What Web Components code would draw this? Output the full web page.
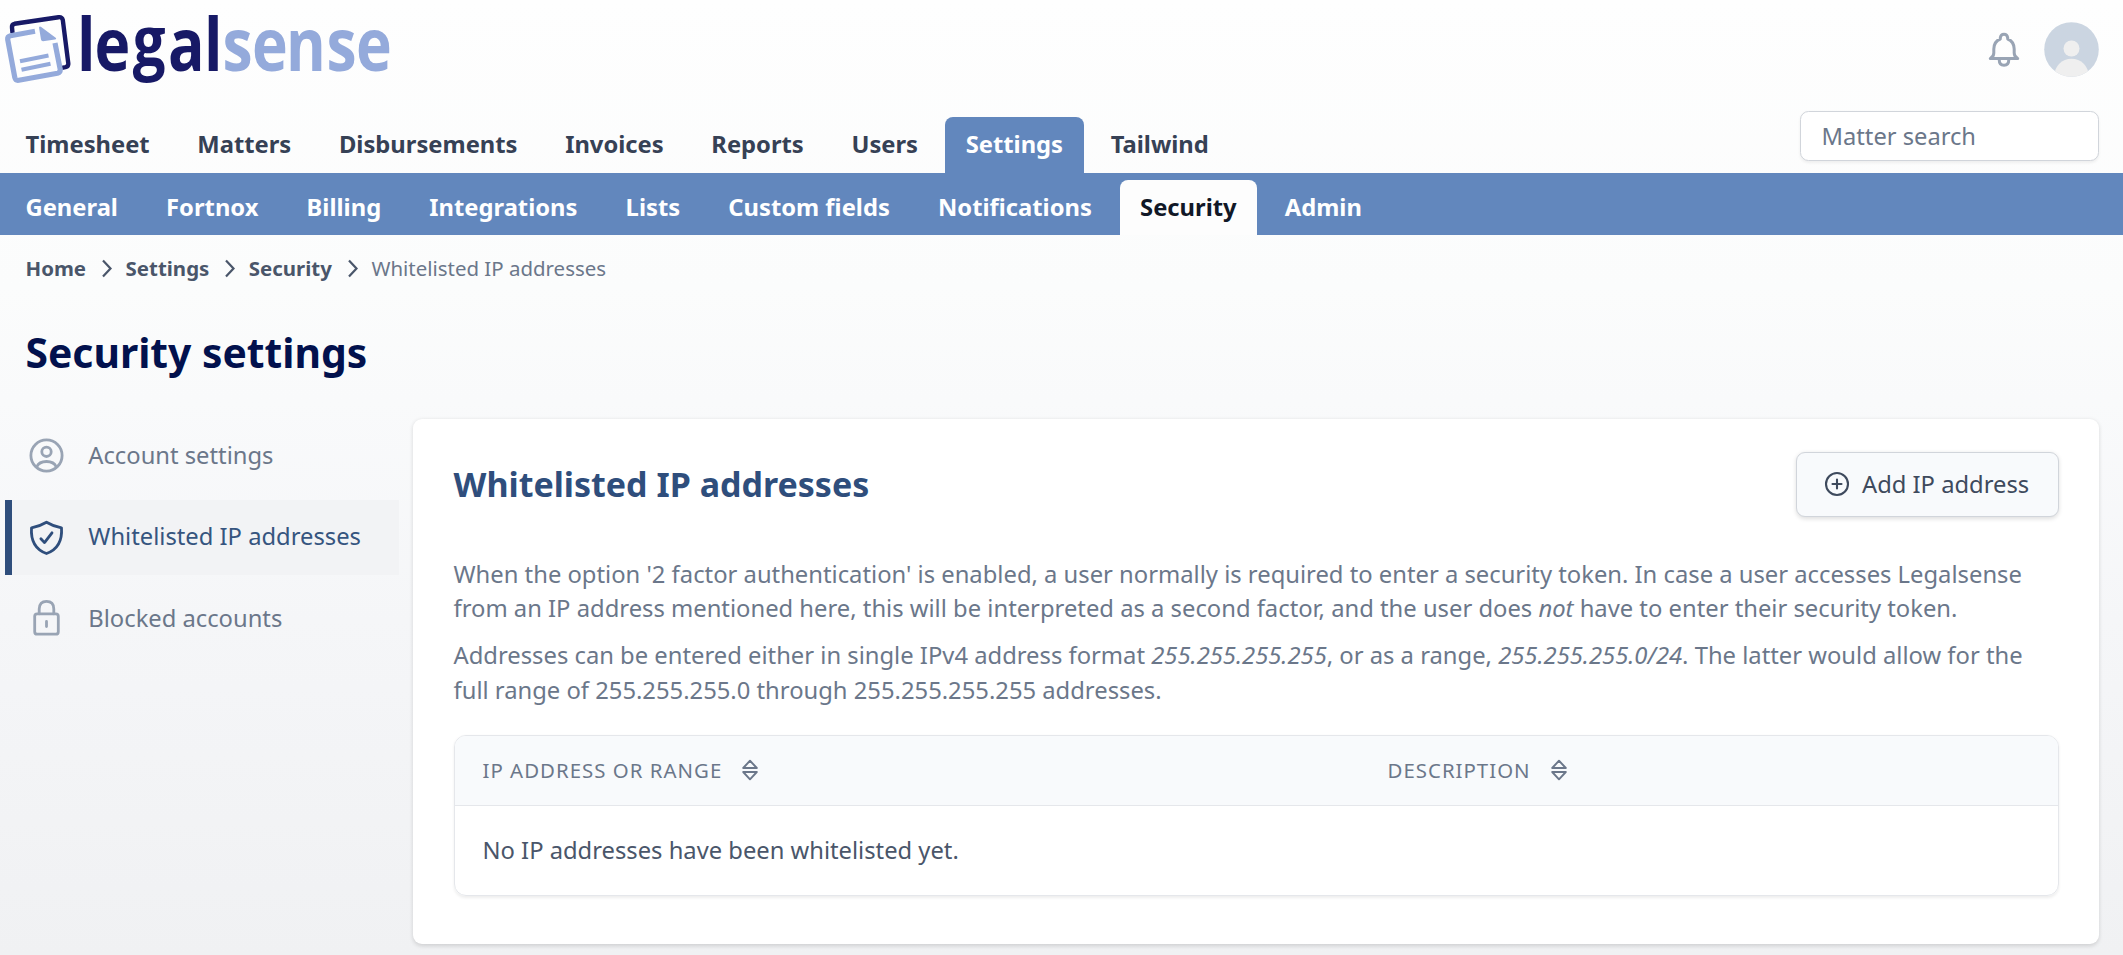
<!DOCTYPE html>
<html lang="en">
<head>
<meta charset="utf-8">
<title>Legalsense</title>
<style>
html,body{margin:0;height:100%}
body{font-family:"Noto Sans",sans-serif;font-size:23.75px;line-height:34.2px;color:#4a566a;overflow:hidden}
</style>
</head>
<body>
<ls-app></ls-app>
<script>
const define = (name, html) => {
  const tpl = document.createElement('template');
  tpl.innerHTML = html;
  customElements.define(name, class extends HTMLElement {
    constructor(){ super(); this.attachShadow({mode:'open'}).append(tpl.content.cloneNode(true)); }
  });
};

define('ls-logo', `
<style>:host{display:block;width:400px;height:100px}svg{display:block;overflow:visible}text{font-family:"Open Sans","Noto Sans",sans-serif;font-size:73px;font-weight:700}</style>
<svg width="400" height="100" viewBox="0 0 400 100">
  <g fill="none" stroke-width="4.4" stroke-linejoin="round">
    <path stroke="#171966" d="M12.5 33L12 27.500Q11.600 24.500 14.500 23.800L58.500 17.200Q62 16.800 62.800 20L68.300 63.500Q68.600 66.500 65.500 67.200L62 67.800"/>
    <path stroke="#94aadb" stroke-width="5.2" d="M35 31.300L10.500 35.700Q7.300 36.500 7.700 39.500L14.800 77.500Q15.600 80.800 18.800 80.300L57.500 73.300Q60.700 72.500 60.200 69.200L55 43"/>
    <path stroke="#94aadb" stroke-width="4.200" d="M20 61.300L48.500 55.500M21.500 69.700L50.500 63.700"/>
  </g>
  <path fill="#94aadb" d="M39 27.500Q39.600 25.700 41.200 27L56 38Q56.700 39 55 39.500L43 41.200Q41.300 41.200 41 39.500Z"/>
  <text transform="scale(.83 1)" y="71" x="92.800 113.900 159.800 202.500 245.800" fill="#171966">le<tspan font-size="70" dy="-5.500">g</tspan><tspan dy="5.500">al</tspan></text>
  <text transform="scale(.83 1)" y="71" x="268.100 303.600 344.600 393.400 428.900" fill="#94aadb">sense</text>
</svg>`);

define('ls-bell', `
<style>:host{display:block;width:32px;height:36px}svg{display:block}</style>
<svg width="32" height="36" viewBox="0 0 32 36" fill="none" stroke="#99a4b4" stroke-width="3" stroke-linecap="round" stroke-linejoin="round">
<path d="M2.300 26.500H29.700M2.300 26.500Q5.800 24.500 5.800 21V17Q6 9.500 12.300 7V5.800Q12.800 2.200 16 2.200Q19.200 2.200 19.700 5.800V7Q26 9.500 26.200 17V21Q26.200 24.500 29.700 26.500M11.200 27.500Q11.200 33.300 16 33.300Q20.800 33.300 20.800 27.500"/></svg>`);

define('ls-avatar', `
<style>:host{display:block;width:55px;height:55px}svg{display:block}</style>
<svg width="55" height="55" viewBox="0 0 55 55"><defs><clipPath id="c"><circle cx="27.500" cy="27.500" r="27.300"/></clipPath></defs>
<g clip-path="url(#c)"><rect width="55" height="55" fill="#cbd5e1"/><g fill="#efefef"><circle cx="27.500" cy="26.500" r="8"/><circle cx="27.500" cy="54" r="17.300"/></g></g></svg>`);

define('ls-search', `
<style>:host{display:flex;align-items:center;box-sizing:border-box;width:299px;height:50.500px;padding:0 20.500px;border:1.500px solid #d1d5db;border-radius:8.500px;background:#fff;color:#6b778a;font-size:23.700px;box-shadow:0 1.400px 3px rgba(0,0,0,.06)}</style><slot></slot>`);

define('ls-tab', `
<style>
:host{display:block;flex:none;box-sizing:border-box;height:56px;padding:10.300px 20.500px 0;border-radius:8px 8px 0 0;font-weight:700;font-size:23.750px;color:#364155;white-space:nowrap}
:host([level="2"]){color:#fff;height:54.500px}
:host([active]){background:#6287bd;color:#fff}
:host([level="2"][active]){background:#fdfdfd;color:#111827}
</style><slot></slot>`);

define('ls-header', `
<style>
:host{display:block}
.top{display:flex;justify-content:space-between;height:100px}
.user{display:flex;align-items:center;gap:24px;height:99px;padding-right:24px}
.main{display:flex;justify-content:space-between;height:73px}
nav{display:flex;gap:6.650px;padding-left:5px;align-items:flex-end}
ls-search{margin:10.500px 24px 0 0}
.sub{display:flex;align-items:flex-end;background:#6287bd;height:61.500px}
.sub nav{gap:7.150px}
</style>
<div class="top"><ls-logo></ls-logo><div class="user"><ls-bell></ls-bell><ls-avatar></ls-avatar></div></div>
<div class="main"><nav><ls-tab>Timesheet</ls-tab><ls-tab>Matters</ls-tab><ls-tab>Disbursements</ls-tab><ls-tab>Invoices</ls-tab><ls-tab>Reports</ls-tab><ls-tab>Users</ls-tab><ls-tab active>Settings</ls-tab><ls-tab>Tailwind</ls-tab></nav><ls-search>Matter search</ls-search></div>
<div class="sub"><nav><ls-tab level="2">General</ls-tab><ls-tab level="2">Fortnox</ls-tab><ls-tab level="2">Billing</ls-tab><ls-tab level="2">Integrations</ls-tab><ls-tab level="2">Lists</ls-tab><ls-tab level="2">Custom fields</ls-tab><ls-tab level="2">Notifications</ls-tab><ls-tab level="2" active>Security</ls-tab><ls-tab level="2">Admin</ls-tab></nav></div>`);

define('ls-breadcrumbs', `
<style>
:host{display:flex;align-items:center;height:28px;padding:19.500px 0 1px 25.500px;font-size:20.450px;line-height:28px}
b{font-weight:700}span{color:#6b778a}svg{margin:0 12.500px 0 15px;flex:none}
</style>
<b>Home</b><svg width="12" height="19" viewBox="0 0 12 19" fill="none" stroke="#4a566a" stroke-width="2.200"><path d="M2 1.500L9.500 9.500L2 17.500"/></svg><b>Settings</b><svg width="12" height="19" viewBox="0 0 12 19" fill="none" stroke="#4a566a" stroke-width="2.200"><path d="M2 1.500L9.500 9.500L2 17.500"/></svg><b>Security</b><svg width="12" height="19" viewBox="0 0 12 19" fill="none" stroke="#4a566a" stroke-width="2.200"><path d="M2 1.500L9.500 9.500L2 17.500"/></svg><span>Whitelisted IP addresses</span>`);

define('ls-side-item', `
<style>
:host{display:flex;align-items:center;box-sizing:border-box;height:75px;border-left:7px solid transparent;padding:0 0 2px 15px;color:#6b778a;white-space:nowrap}
:host([active]){border-color:#2f4e7c;background:#f2f3f5;background-clip:padding-box;color:#36557f}
::slotted(svg){flex:none;width:40px;height:40px;margin:2px 21.300px 0 0;fill:none;stroke:#99a4b4;stroke-width:2.800;stroke-linecap:round;stroke-linejoin:round}
:host([active]) ::slotted(svg){stroke:#2f4e7c}
</style><slot></slot>`);

define('ls-sidebar', `
<style>:host{display:flex;flex-direction:column;gap:6.500px;width:394px}</style>
<ls-side-item><svg viewBox="0 0 40 40"><circle cx="19.500" cy="19.500" r="15.600"/><circle cx="19.500" cy="15.800" r="4.700"/><path d="M9.700 31Q12 25.500 19.500 25.500Q27 25.500 29.300 31"/></svg>Account settings</ls-side-item>
<ls-side-item active><svg viewBox="0 0 40 40"><path d="M19.500 4.200Q26.500 8.400 34.500 9.800C35.400 23 30.500 31.500 19.500 35.500C8.500 31.500 3.600 23 4.500 9.800Q12.500 8.400 19.500 4.200Z"/><path d="M13.900 20.800L17.500 24.600L25 14.800"/></svg>Whitelisted IP addresses</ls-side-item>
<ls-side-item><svg viewBox="0 0 40 40"><rect x="7.700" y="14.800" width="23.600" height="20.400" rx="2.500"/><path d="M12.200 14.800V10Q12.500 2.400 19.500 2.400Q26.800 2.400 26.800 10V14.800M19.500 22.500V27.500"/></svg>Blocked accounts</ls-side-item>`);

define('ls-button', `
<style>
:host{display:flex;align-items:center;box-sizing:border-box;height:65px;width:262.500px;padding:0 0 0 27px;border:1.500px solid #d1d5db;border-radius:9px;background:#f8fafc;color:#3e4a5d;box-shadow:0 1.400px 4px rgba(0,0,0,.13);white-space:nowrap}
svg{margin-right:12px;flex:none}
</style><svg width="26" height="26" viewBox="0 0 26 26" fill="none" stroke="#3e4a5d" stroke-width="2.100" stroke-linecap="round"><circle cx="13" cy="13" r="11"/><path d="M13 8.500V17.500M8.500 13H17.500"/></svg><slot></slot>`);

define('ls-sort-label', `
<style>:host{display:flex;align-items:center;font-size:20.400px;letter-spacing:1.020px;color:#6b778a;white-space:nowrap}svg{margin-left:19px}</style><slot></slot><svg width="18" height="22" viewBox="0 0 18 22" fill="none" stroke="#6b778a" stroke-width="1.900" stroke-linejoin="round"><path d="M9 1.700L15.800 9H2.200ZM9 20.300L15.800 13H2.200Z"/></svg>`);

define('ls-ip-table', `
<style>
:host{display:block;box-sizing:border-box;height:161.500px;border:1.500px solid #e5e7eb;border-radius:12px;overflow:hidden;box-shadow:0 1.400px 3px rgba(0,0,0,.07)}
.head{display:grid;grid-template-columns:905px 1fr;align-items:center;background:#f8fafc;box-sizing:border-box;height:70.500px;border-bottom:1.500px solid #e5e7eb;padding:0 0 1px 28px}
.row{display:flex;align-items:center;height:87px;padding-left:28px}
</style>
<div class="head"><ls-sort-label>IP ADDRESS OR RANGE</ls-sort-label><ls-sort-label>DESCRIPTION</ls-sort-label></div>
<div class="row">No IP addresses have been whitelisted yet.</div>`);

define('ls-card', `
<style>
:host{display:block;box-sizing:border-box;width:1686px;height:525.500px;padding:33px 40.500px 0 40.500px;background:#fff;border-radius:9px;box-shadow:0 1.400px 4px rgba(0,0,0,.14)}
header{display:flex;justify-content:space-between;align-items:center;margin-bottom:40px}
h2{margin:0;font-size:34px;font-weight:700;line-height:46px;color:#2f4e7c}
p{margin:0 0 13.500px;color:#6b778a;white-space:nowrap;font-size:23.790px}
ls-ip-table{margin-top:28px}
</style>
<header><h2>Whitelisted IP addresses</h2><ls-button>Add IP address</ls-button></header>
<p>When the option '2 factor authentication' is enabled, a user normally is required to enter a security token. In case a user accesses Legalsense<br>from an IP address mentioned here, this will be interpreted as a second factor, and the user does <i>not</i> have to enter their security token.</p>
<p>Addresses can be entered either in single IPv4 address format <i>255.255.255.255</i>, or as a range, <i>255.255.255.0/24</i>. The latter would allow for the<br>full range of 255.255.255.0 through 255.255.255.255 addresses.</p>
<ls-ip-table></ls-ip-table>`);

define('ls-app', `
<style>
:host{display:block;height:955px;overflow:hidden;background:linear-gradient(#fefefe,#fbfcfc 30%,#f9fafb 42%,#f5f6f8 65%,#f0f1f3)}
h1{margin:48px 0 0 25.500px;height:46.500px;line-height:43.600px;font-size:40.800px;font-weight:700;color:#02114d;overflow:hidden}
main{display:flex;gap:14px;padding:41px 0 0 5px}
</style>
<ls-header></ls-header><ls-breadcrumbs></ls-breadcrumbs>
<h1>Security settings</h1>
<main><ls-sidebar></ls-sidebar><ls-card></ls-card></main>`);
</script>
</body>
</html>
